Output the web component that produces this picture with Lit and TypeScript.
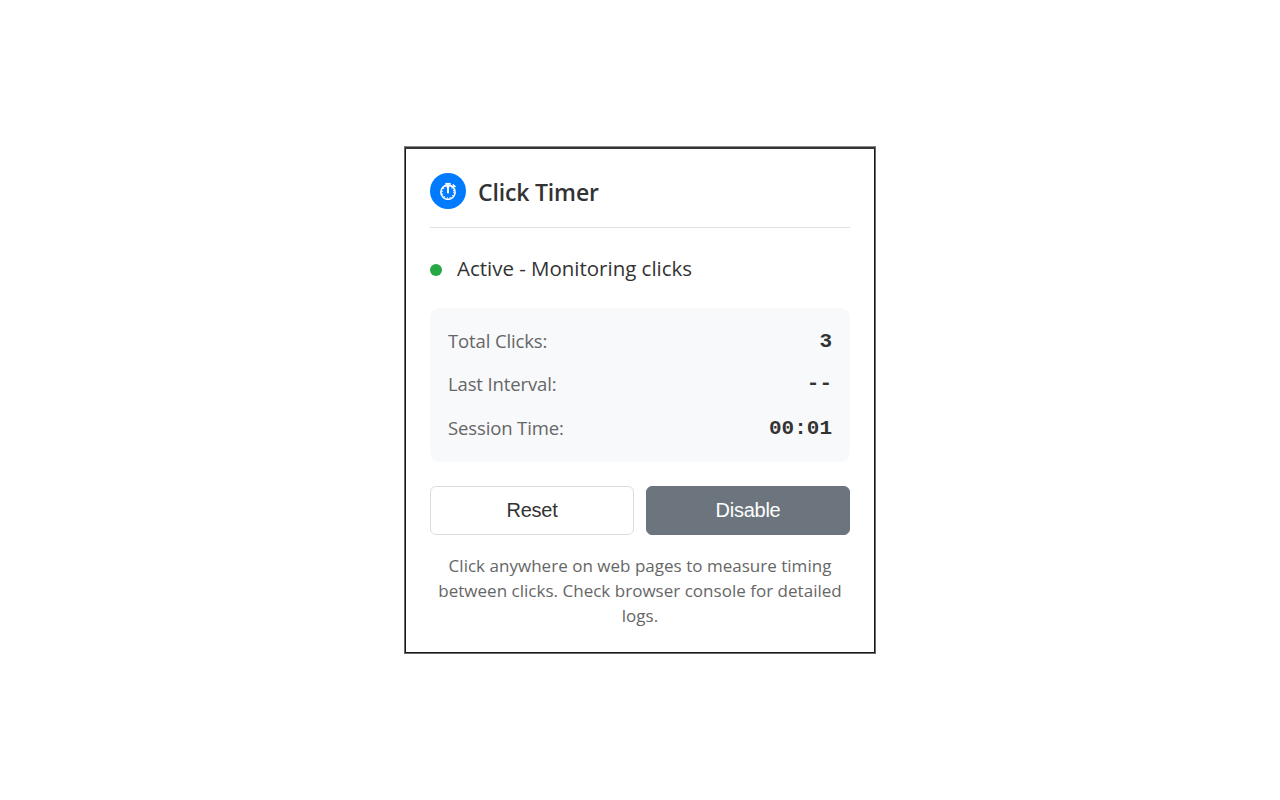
import { LitElement, html, css } from 'lit';
import { customElement, state } from 'lit/decorators.js';

@customElement('app-root')
export class ClickTimer extends LitElement {
  @state()
  private enabled = true;

  @state()
  private totalClicks = 3;

  @state()
  private lastInterval = '--';

  @state()
  private sessionTime = '00:01';

  private reset() {
    this.totalClicks = 0;
    this.lastInterval = '--';
    this.sessionTime = '00:00';
  }

  private toggle() {
    this.enabled = !this.enabled;
  }

  render() {
    return html`
      <main class="popup">
        <header class="header">
          <div class="logo">
            <svg width="18" height="18" viewBox="0 0 18 18" fill="none" stroke="#fff">
              <circle cx="9" cy="10.2" r="7.1" stroke-width="1.6" />
              <circle cx="9" cy="10.2" r="5.7" stroke-width="1.3" stroke-dasharray="1 1.98" />
              <path d="M9 2.5v8.8" stroke-width="2" />
              <path d="M6.3 1.8h5.4" stroke-width="1.8" />
              <path d="M13.6 5.4l1.5-1.6M13.8 2.5l2.7 2.5" stroke-width="1.7" />
            </svg>
          </div>
          <h1 class="title">Click Timer</h1>
        </header>

        <div class="status">
          <span class="dot ${this.enabled ? '' : 'off'}"></span>
          <span class="status-text">${this.enabled ? 'Active - Monitoring clicks' : 'Disabled'}</span>
        </div>

        <section class="stats">
          <div class="stat">
            <span class="label">Total Clicks:</span>
            <span class="value">${this.totalClicks}</span>
          </div>
          <div class="stat">
            <span class="label">Last Interval:</span>
            <span class="value empty">${this.lastInterval}</span>
          </div>
          <div class="stat">
            <span class="label">Session Time:</span>
            <span class="value">${this.sessionTime}</span>
          </div>
        </section>

        <div class="controls">
          <button class="btn" @click=${this.reset}>Reset</button>
          <button class="btn primary" @click=${this.toggle}>${this.enabled ? 'Disable' : 'Enable'}</button>
        </div>

        <p class="help">
          Click anywhere on web pages to measure timing<br />
          between clicks. Check browser console for detailed<br />
          logs.
        </p>
      </main>
    `;
  }

  static styles = css`
    :host {
      display: flex;
      align-items: center;
      justify-content: center;
      height: 100vh;
      background: #fff;
      color: #333;
      font-family: 'Open Sans', 'Noto Sans', sans-serif;
    }
    .popup {
      box-sizing: border-box;
      width: 472px;
      height: 508px;
      padding: 26px 25px 0;
      border: 1px solid #6b6b70;
      border-top-color: #8a8a8a;
      box-shadow: inset 0 2px 0 #333436, inset 0 0 0 1px #17171b;
    }
    .header {
      display: flex;
      align-items: center;
      gap: 12px;
      height: 36px;
      padding-bottom: 18px;
      border-bottom: 1px solid #e0e0e0;
    }
    .logo {
      display: flex;
      align-items: center;
      justify-content: center;
      width: 36px;
      height: 36px;
      border-radius: 50%;
      background: #007bff;
    }
    .title {
      margin: 2px 0 0;
      font-size: 23px;
      line-height: 32px;
      font-weight: 600;
      letter-spacing: -0.16px;
    }
    .status {
      display: flex;
      align-items: center;
      gap: 15px;
      height: 36px;
      margin-top: 24px;
    }
    .dot {
      width: 12px;
      height: 12px;
      border-radius: 50%;
      background: #28a745;
    }
    .dot.off {
      background: #dc3545;
    }
    .status-text {
      padding-bottom: 4px;
      font-size: 20.5px;
      line-height: 28px;
      letter-spacing: -0.02px;
    }
    .stats {
      box-sizing: border-box;
      display: flex;
      flex-direction: column;
      gap: 17.4px;
      height: 154px;
      margin-top: 20px;
      padding: 20px 18px;
      border-radius: 9px;
      background: #f8f9fa;
    }
    .stat {
      display: flex;
      align-items: center;
      justify-content: space-between;
      height: 26px;
    }
    .label {
      color: #666;
      font-size: 18.5px;
      line-height: 26px;
      letter-spacing: -0.13px;
    }
    .value {
      padding-top: 2px;
      font-family: 'Liberation Mono', monospace;
      font-size: 21px;
      line-height: 26px;
      font-weight: 700;
    }
    .value.empty {
      padding-top: 0;
    }
    .controls {
      display: flex;
      gap: 12px;
      margin-top: 24px;
    }
    .btn {
      flex: 1;
      height: 49px;
      padding: 0;
      border: 1px solid #ddd;
      border-radius: 6px;
      background: #fff;
      color: #333;
      font-family: 'Liberation Sans', Arial, sans-serif;
      font-size: 20px;
      letter-spacing: -0.25px;
      cursor: pointer;
    }
    .btn.primary {
      border-color: #6c757d;
      background: #6c757d;
      color: #fff;
    }
    .help {
      margin: 18px 0 0;
      color: #666;
      font-size: 17px;
      line-height: 25px;
      text-align: center;
      white-space: nowrap;
      letter-spacing: 0.02px;
    }
  `;
}
